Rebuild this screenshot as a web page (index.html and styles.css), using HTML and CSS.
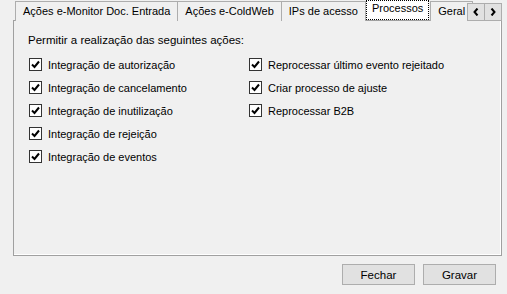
FILE: index.html
```html
<!DOCTYPE html>
<html lang="pt-BR">
<head>
  <meta charset="UTF-8">
  <title>Configurações</title>
  <link rel="stylesheet" href="styles.css">
</head>
<body>
  <div class="window">

    <!-- Tab strip -->
    <div class="tabstrip">
      <div class="tab">Ações e-Monitor Doc. Entrada</div>
      <div class="tab">Ações e-ColdWeb</div>
      <div class="tab">IPs de acesso</div>
      <div class="tab selected">Processos</div>
      <div class="tab">Geral</div>
      <div class="scroller">
        <span class="arrow">
          <svg width="6" height="8" viewBox="0 0 6 8"><path d="M4.5 0.5 L1.5 4 L4.5 7.5" fill="none" stroke="#000" stroke-width="2"/></svg>
        </span>
        <span class="arrow">
          <svg width="6" height="8" viewBox="0 0 6 8"><path d="M1.5 0.5 L4.5 4 L1.5 7.5" fill="none" stroke="#000" stroke-width="2"/></svg>
        </span>
      </div>
    </div>

    <!-- Tab page -->
    <div class="page">
      <p class="caption">Permitir a realização das seguintes ações:</p>
      <div class="columns">
        <div class="column">
          <label class="check"><span class="box"></span>Integração de autorização</label>
          <label class="check"><span class="box"></span>Integração de cancelamento</label>
          <label class="check"><span class="box"></span>Integração de inutilização</label>
          <label class="check"><span class="box"></span>Integração de rejeição</label>
          <label class="check"><span class="box"></span>Integração de eventos</label>
        </div>
        <div class="column">
          <label class="check"><span class="box"></span>Reprocessar último evento rejeitado</label>
          <label class="check"><span class="box"></span>Criar processo de ajuste</label>
          <label class="check"><span class="box"></span>Reprocessar B2B</label>
        </div>
      </div>
    </div>

    <!-- Buttons -->
    <div class="actions">
      <button class="btn">Fechar</button>
      <button class="btn">Gravar</button>
    </div>
  </div>

  <script>
    // fill every checkbox with the tick
    const tick = '<svg width="9" height="9" viewBox="0 0 9 9"><path d="M1 4.5 L3.5 7 L8 1.5" fill="none" stroke="#000" stroke-width="2"/></svg>';
    document.querySelectorAll(".box").forEach(function (box) {
      box.innerHTML = tick;
    });
  </script>
</body>
</html>
```

FILE: styles.css
```css
/* General Styles */
body {
  margin: 0;
  background: #f0f0f0;
  font-family: "Liberation Sans", Arial, sans-serif;
  font-size: 11px;
  color: #000;
}

.window {
  width: 507px;
  height: 294px;
  padding: 0 5px 0 13px;
  box-sizing: border-box;
}

/* Tab strip */
.tabstrip {
  position: relative;
  display: flex;
  align-items: flex-end;
  height: 21px;
  padding-left: 2px;
  margin-bottom: -1px;
  overflow: hidden;
  z-index: 1;
}

.tab {
  height: 19px;
  line-height: 18px;
  padding: 0 7px;
  border: 1px solid #adadad;
  border-bottom: none;
  margin-right: -1px;
  background: #f0f0f0;
  white-space: nowrap;
}

.tab.selected {
  height: 20px;
  line-height: 17px;
  padding: 0 6px;
  margin: 0 1px 1px 1px;
  border: none;
  background: #ffffff;
  outline: 1px dotted #000;
  outline-offset: -1px;
}

.scroller {
  position: absolute;
  right: 0;
  top: 3px;
  display: flex;
  background: #f0f0f0;
}

.arrow {
  display: flex;
  align-items: center;
  justify-content: center;
  width: 16px;
  height: 16px;
  border: 1px solid #adadad;
  margin-left: -1px;
  background: #e1e1e1;
}

/* Tab page */
.page {
  height: 236px;
  border: 1px solid #a0a0a0;
  box-shadow: inset -1px -1px 0 #ffffff;
  box-sizing: border-box;
  padding: 12px 14px;
}

.caption {
  margin: 0 0 5px;
  line-height: 15px;
  font-size: 11.5px;
}

.columns {
  display: flex;
}

.column {
  display: flex;
  flex-direction: column;
  width: 220px;
}

.check {
  display: flex;
  align-items: center;
  height: 23px;
  padding-left: 1px;
  white-space: nowrap;
}

.box {
  display: flex;
  align-items: center;
  justify-content: center;
  width: 11px;
  height: 11px;
  border: 1px solid #333;
  background: #fff;
  margin-right: 6px;
}

/* Buttons */
.actions {
  display: flex;
  justify-content: flex-end;
  gap: 8px;
  padding: 8px 6px 0 0;
}

.btn {
  width: 73px;
  height: 21px;
  border: 1px solid #adadad;
  background: #e1e1e1;
  font-family: inherit;
  font-size: 11.5px;
  color: #000;
  padding: 0;
}
```
